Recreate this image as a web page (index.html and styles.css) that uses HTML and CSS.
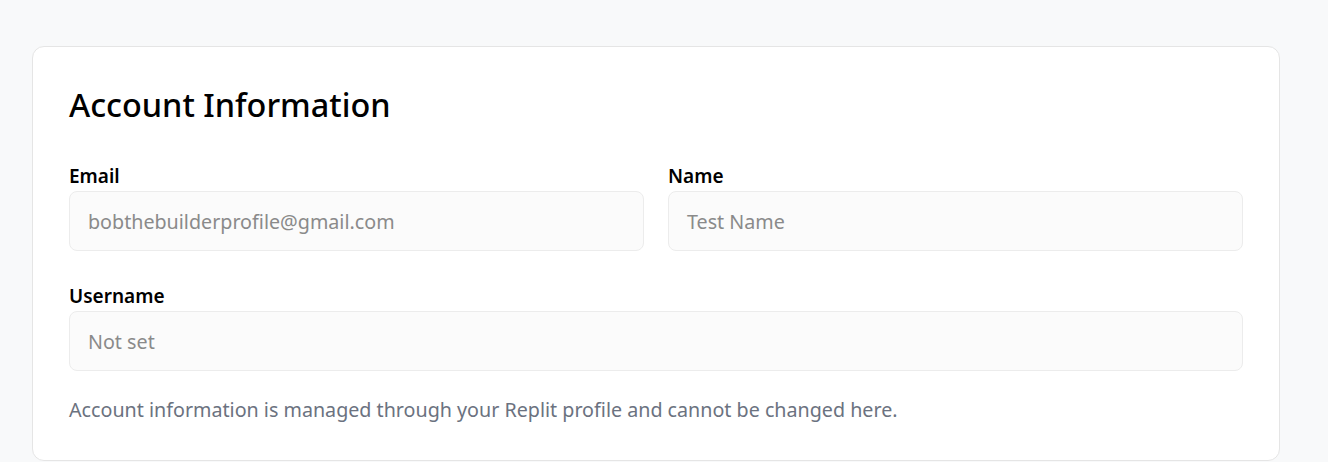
FILE: index.html
```html
<!DOCTYPE html>
<html lang="en">
<head>
<meta charset="utf-8">
<title>Account Information</title>
<link rel="stylesheet" href="styles.css">
</head>
<body>
<main class="page">
  <section class="card">
    <h2 class="card-title">Account Information</h2>
    <div class="grid">
      <div class="field">
        <label class="label">Email</label>
        <div class="input">bobthebuilderprofile@gmail.com</div>
      </div>
      <div class="field">
        <label class="label">Name</label>
        <div class="input">Test Name</div>
      </div>
      <div class="field full">
        <label class="label">Username</label>
        <div class="input">Not set</div>
      </div>
    </div>
    <p class="note">Account information is managed through your Replit profile and cannot be changed here.</p>
  </section>
</main>
</body>
</html>
```
FILE: styles.css
```css
* { box-sizing: border-box; }
html, body { margin: 0; padding: 0; }
body {
  background: #f8f9fa;
  font-family: "Noto Sans", "Open Sans", sans-serif;
  color: #000;
}
.page {
  padding: 46px 48px 0 32px;
}
.card {
  background: #fff;
  border: 1px solid #e5e5e5;
  border-radius: 12px;
  padding: 37px 36px 38px 36px;
}
.card-title {
  margin: 0 0 40px;
  font-size: 32.4px;
  font-weight: 500;
  line-height: 40px;
}
.grid {
  display: grid;
  grid-template-columns: 1fr 1fr;
  column-gap: 24px;
  row-gap: 33px;
}
.full { grid-column: 1 / -1; }
.field { display: flex; flex-direction: column; gap: 3px; }
.label {
  font-size: 19px;
  font-weight: 600;
  line-height: 24px;
}
.input {
  height: 60px;
  border: 1px solid #ececec;
  border-radius: 8px;
  background: #fbfbfb;
  padding: 0 18px;
  display: flex;
  align-items: center;
  font-size: 19.7px;
  color: #8a8a8a;
}
.note {
  margin: 27px 0 0;
  font-size: 19.7px;
  line-height: 24px;
  color: #6b7280;
}
```
